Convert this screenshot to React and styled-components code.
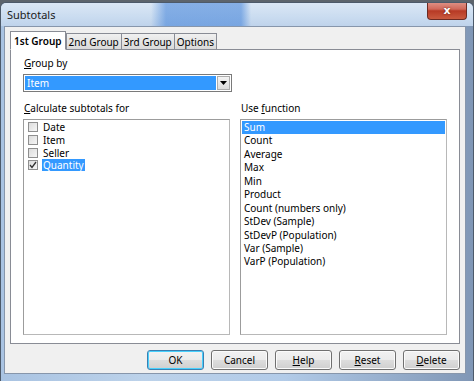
import React from 'react';
import styled, { createGlobalStyle } from 'styled-components';

const Global = createGlobalStyle`
  html, body {
    margin: 0;
    padding: 0;
    background: #5d646c;
  }
  body {
    font-family: "Segoe UI", "Noto Sans", sans-serif;
    font-size: 10px;
    color: #000;
  }
`;

const Window = styled.div`
  width: 474px;
  height: 381px;
  box-sizing: border-box;
  padding-top: 2px;
  display: flex;
  flex-direction: column;
`;

const Frame = styled.div`
  flex: 1;
  display: flex;
  flex-direction: column;
  border-radius: 6px 6px 0 0;
  border: 1px solid #4d5a6a;
  border-bottom: none;
  background: linear-gradient(90deg, #a9c3e2 0%, #bcd2ea 30%, #b2cbe8 60%, #8097b6 100%);
  overflow: hidden;
`;

const TitleBar = styled.div`
  height: 23px;
  flex: none;
  display: flex;
  align-items: center;
  justify-content: space-between;
  padding-left: 6px;
  background:
    linear-gradient(90deg, transparent 0, transparent 150px, rgba(50, 120, 215, 0.5) 165px, rgba(50, 120, 215, 0.5) 240px, transparent 250px),
    linear-gradient(180deg, #dbe7f5 0%, #cadcf0 60%, #bfd3eb 100%);
`;

const Title = styled.span`
  font-size: 11px;
  color: #1a1a1a;
`;

const CloseButton = styled.div`
  align-self: flex-start;
  margin-top: -2px;
  margin-right: 6px;
  width: 38px;
  height: 18px;
  border: 1px solid #6b2a22;
  border-top: none;
  border-radius: 0 0 4px 4px;
  background: linear-gradient(180deg, #e39b8f 0%, #d0685a 45%, #b73a25 55%, #c95a3f 100%);
  display: flex;
  align-items: center;
  justify-content: center;
  color: #fff;
  font-family: "DejaVu Sans", sans-serif;
  font-weight: bold;
  font-size: 11px;
  text-shadow: 0 0 2px #5a1b10;
`;

const Client = styled.div`
  flex: 1;
  margin: 0 7px 7px 3px;
  background: #f0f0f0;
  border: 1px solid #8796ab;
  display: flex;
  flex-direction: column;
  padding: 4px 5px 0 5px;
`;

const TabRow = styled.div`
  display: flex;
  align-items: flex-end;
  height: 19px;
  position: relative;
  z-index: 1;
`;

const Tab = styled.div`
  box-sizing: border-box;
  height: ${p => (p.$active ? '19px' : '17px')};
  padding: 0 ${p => (p.$active ? '3px' : '2px')};
  margin-right: ${p => (p.$active ? '0' : '-1px')};
  display: flex;
  align-items: center;
  font-size: 10px;
  font-weight: ${p => (p.$active ? 600 : 400)};
  border: 1px solid #898c95;
  border-bottom: ${p => (p.$active ? '1px solid #fff' : '1px solid #898c95')};
  background: ${p => (p.$active ? '#fff' : 'linear-gradient(180deg, #f0f0f0 0%, #e5e5e5 50%, #d9d9d9 100%)')};
`;

const Panel = styled.div`
  box-sizing: border-box;
  height: 295px;
  margin-top: -1px;
  background: #fff;
  border: 1px solid #898c95;
  padding: 6px 12px 0 12px;
  display: flex;
  flex-direction: column;
`;

const Label = styled.div`
  font-size: 10px;
  height: 14px;
  line-height: 14px;
  margin-bottom: 4px;
  padding-left: 1px;
  u { text-decoration: underline; }
`;

const Select = styled.div`
  box-sizing: border-box;
  width: 209px;
  height: 18px;
  border: 1px solid #7a7a7a;
  padding: 1px;
  display: flex;
  margin-bottom: 9px;
`;

const SelectValue = styled.div`
  flex: 1;
  background: #3399ff;
  color: #fff;
  font-size: 10px;
  line-height: 14px;
  padding-left: 2px;
`;

const ArrowButton = styled.div`
  width: 13px;
  margin-left: 1px;
  border: 1px solid #acacac;
  box-sizing: border-box;
  background: linear-gradient(180deg, #f4f4f4, #dcdcdc);
  display: flex;
  align-items: center;
  justify-content: center;
`;

const Columns = styled.div`
  display: flex;
  gap: 10px;
`;

const Column = styled.div`
  display: flex;
  flex-direction: column;
  width: 209px;
`;

const ListBox = styled.div`
  box-sizing: border-box;
  height: 216px;
  border: 1px solid #a0a0a0;
  border-color: #9c9c9c #b8b8b8 #b8b8b8 #9c9c9c;
  padding: 1px 1px;
  background: #fff;
`;

const CheckRow = styled.div`
  display: flex;
  align-items: center;
  height: 12.7px;
  padding-left: 3px;
  font-size: 10px;
`;

const Box = styled.span`
  box-sizing: border-box;
  width: 10px;
  height: 10px;
  border: 1px solid #8f8f8f;
  background: linear-gradient(135deg, #dcdcdc, #f6f6f6);
  margin-right: 4px;
  display: flex;
  align-items: center;
  justify-content: center;
`;

const CheckText = styled.span`
  padding: 0 1px;
  line-height: 12px;
  background: ${p => (p.$selected ? '#3399ff' : 'transparent')};
  color: ${p => (p.$selected ? '#fff' : '#000')};
`;

const FuncRow = styled.div`
  height: 13.45px;
  line-height: 13.45px;
  padding-left: 2px;
  font-size: 10px;
  background: ${p => (p.$selected ? '#3399ff' : 'transparent')};
  color: ${p => (p.$selected ? '#fff' : '#000')};
`;

const ButtonBar = styled.div`
  display: flex;
  justify-content: flex-end;
  gap: 7px;
  margin-top: 6px;
`;

const Button = styled.div`
  box-sizing: border-box;
  width: 57px;
  height: 20px;
  border: 1px solid ${p => (p.$default ? '#3c7fb1' : '#707070')};
  border-radius: 3px;
  background: linear-gradient(180deg, #f2f2f2 0%, #ebebeb 50%, #dddddd 51%, #cfcfcf 100%);
  box-shadow: ${p => (p.$default ? 'inset 0 0 0 1px #48d0fd' : 'inset 0 0 0 1px #fbfbfb')};
  display: flex;
  align-items: center;
  justify-content: center;
  font-size: 10px;
`;

const groups = ['Date', 'Item', 'Seller', 'Quantity'];
const functions = [
  'Sum', 'Count', 'Average', 'Max', 'Min', 'Product', 'Count (numbers only)',
  'StDev (Sample)', 'StDevP (Population)', 'Var (Sample)', 'VarP (Population)',
];

const App = () => (
  <Window>
    <Global />
    <Frame>
      <TitleBar>
        <Title>Subtotals</Title>
        <CloseButton>x</CloseButton>
      </TitleBar>
      <Client>
        <TabRow>
          <Tab $active>1st Group</Tab>
          <Tab>2nd Group</Tab>
          <Tab>3rd Group</Tab>
          <Tab>Options</Tab>
        </TabRow>
        <Panel>
          <Label><u>G</u>roup by</Label>
          <Select>
            <SelectValue>Item</SelectValue>
            <ArrowButton>
              <svg width="7" height="4" viewBox="0 0 7 4"><path d="M0 0h7L3.5 4z" fill="#000" /></svg>
            </ArrowButton>
          </Select>
          <Columns>
            <Column>
              <Label><u>C</u>alculate subtotals for</Label>
              <ListBox>
                {groups.map((g) => (
                  <CheckRow key={g}>
                    <Box>
                      {g === 'Quantity' && (
                        <svg width="8" height="8" viewBox="0 0 8 8"><path d="M1 4l2 2.5L7 1" fill="none" stroke="#333" strokeWidth="1.3" /></svg>
                      )}
                    </Box>
                    <CheckText $selected={g === 'Quantity'}>{g}</CheckText>
                  </CheckRow>
                ))}
              </ListBox>
            </Column>
            <Column>
              <Label>Use <u>f</u>unction</Label>
              <ListBox>
                {functions.map((f, i) => (
                  <FuncRow key={f} $selected={i === 0}>{f}</FuncRow>
                ))}
              </ListBox>
            </Column>
          </Columns>
        </Panel>
        <ButtonBar>
          <Button $default>OK</Button>
          <Button>Cancel</Button>
          <Button><u>H</u>elp</Button>
          <Button><u>R</u>eset</Button>
          <Button><u>D</u>elete</Button>
        </ButtonBar>
      </Client>
    </Frame>
  </Window>
);

export default App;
